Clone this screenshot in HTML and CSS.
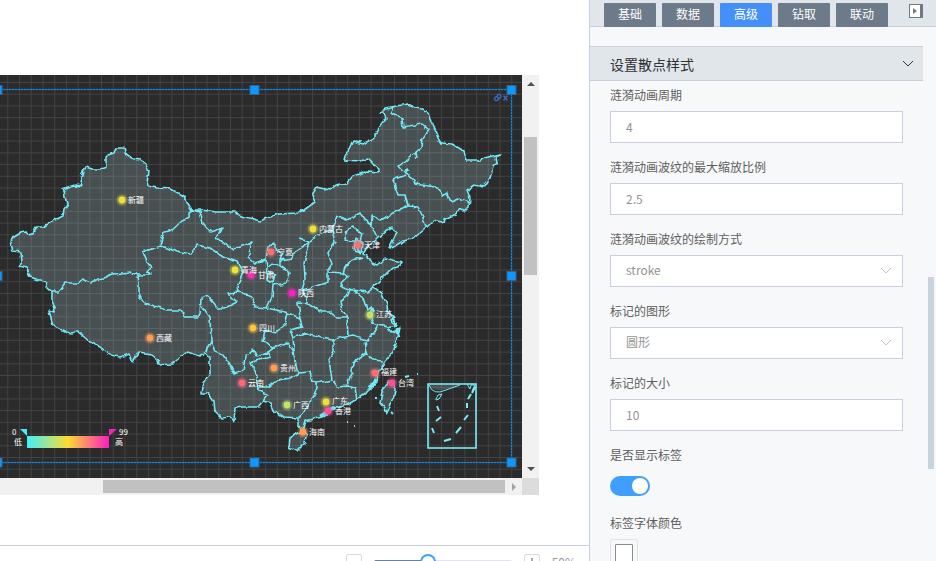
FILE: index.html
```html
<!DOCTYPE html>
<html lang="zh-CN">
<head>
<meta charset="utf-8">
<title>设置散点样式</title>
<link rel="stylesheet" href="styles.css">
</head>
<body>
<div class="app">
  <main class="workspace">
    <div class="stage">
      <svg class="canvas" viewBox="0 75 522 403" role="img" aria-label="中国地图">
        <defs>
          <pattern id="grid" x="19" y="82" width="11.72" height="11.72" patternUnits="userSpaceOnUse">
            <path class="grid-line" d="M.5 0V11.72M0 .5H11.72"/>
          </pattern>
          <linearGradient id="heat">
            <stop offset="0" stop-color="#40effb"/><stop offset=".5" stop-color="#fcdc30"/><stop offset="1" stop-color="#f81ec0"/>
          </linearGradient>
          <filter id="coast" x="-2%" y="-2%" width="104%" height="104%" color-interpolation-filters="sRGB">
            <feTurbulence type="fractalNoise" baseFrequency=".14" numOctaves="2" seed="4" result="n"/>
            <feDisplacementMap in="SourceGraphic" in2="n" scale="5" xChannelSelector="R" yChannelSelector="G"/>
          </filter>
          <g id="dot"><circle r="6.5" opacity=".12"/><circle r="5.2" opacity=".3"/><circle r="3.4"/></g>
        </defs>
        <rect class="backdrop" y="75" width="522" height="403"/>

        <g filter="url(#coast)">
          <path class="land" d="M10 244L13 237 21 232 26 231 28 234 33 233 36 227 43 227 53 221 63 216 64 209 67 205 65 196 64 191 61 189 75 185 82 186 80 182 83 172 86 167 92 169 101 169 106 167 106 157 108 155 114 153 116 148 124 148 125 153 133 159 140 160 146 164 149 171 147 182 148 186 157 188 171 189 183 196 187 202 192 210 200 210 217 212 235 212 238 215 253 219 260 221 278 214 297 213 304 210 315 202 312 195 317 187 330 190 336 185 347 183 353 176 368 171 379 172 379 169 373 164 368 159 360 161 346 160 344 158 353 141 363 144 374 138 374 135 386 119 384 113 380 113 385 108 397 106 407 104 415 108 423 109 430 115 432 122 440 140 442 143 452 144 464 151 467 161 478 161 484 158 501 154 496 158 497 163 493 167 490 178 484 187 474 185 467 190 470 198 469 207 464 212 461 208 457 213 445 219 444 223 434 220 425 229 413 239 403 241 390 249 392 242 397 233 392 228 385 232 378 237 371 244 366 249 363 254 368 256 372 263 377 265 385 258 402 262 399 267 392 268 383 277 373 287 382 293 387 305 388 313 395 317 391 321 396 325 388 327 392 332 400 328 397 338 393 352 385 361 378 372 377 382 367 392 357 399 347 405 335 408 322 417 305 421 303 429 298 427 298 418 283 417 273 410 270 403 263 401 258 407 242 407 235 408 234 421 230 417 222 418 215 411 214 402 208 393 201 393 203 383 210 373 210 357 205 353 200 356 187 352 172 364 158 365 157 359 152 355 138 353 133 362 130 354 120 357 110 355 100 347 90 342 77 331 71 334 53 325 50 315 49 310 54 312 55 307 52 300 52 292 47 287 46 282 30 277 27 268 18 266 22 263 21 252 12 251Z"/>
          <path class="land" d="M299 432L290 438 289 447 297 451 305 443 308 435 303 431ZM388 382L395 383 395 392 387 414 385 408 380 402 382 393Z"/>
          <path class="border" d="M192 210L189 212 189 218 182 221 172 230 164 232 160 246 143 252 147 262 151 267 147 271 150 275 138 275M52 292L58 292 65 283 77 283 82 279 90 283 102 279 113 274 130 272 138 275 139 283 139 297 145 303 167 310 180 310 185 317 197 317 200 314 201 298 207 295 218 308 225 308 237 302 228 293 238 292M160 246L167 248 177 252 190 255 197 245 210 248 223 257 237 262 243 273 237 287 238 292 250 295 255 307 267 308"/>
          <path class="border" d="M192 210L200 212 203 223 210 232 222 228 217 238 233 249 252 243 248 257 255 263 266 259 268 247 275 243 275 250 283 253 280 260 292 258 293 253 310 242 320 233 332 230 337 217 347 220 360 213 365 220 372 225 373 215 380 220 393 213 408 206M255 263L262 262 266 259 267 268 272 264 280 266 280 260M267 268L266 279 273 282 275 274 268 272M280 266L290 273 287 283 273 285 272 297 267 308 288 313 300 318 298 302 308 303 302 290 305 280 304 262 310 242M298 239L310 242"/>
          <path class="border" d="M332 230L335 242 328 253 332 264 328 270 328 282 310 288 302 290M329 272L343 273 346 265 353 260 362 257M343 273L348 277 340 285 352 290 367 292 373 287M350 290L347 297 340 302 342 310 347 318 337 318 330 312 322 312 308 303M347 318L348 336M353 290L363 298 367 310 372 307 370 315 373 323 378 325 388 327M378 325L373 333 367 340 360 338 353 335 348 336 333 340 322 338 310 335M333 340L333 352 329 360 332 380M365 341L367 353 372 360 383 361M367 353L353 363 352 372 347 385M317 383L332 380 338 387 347 386 355 388 357 399"/>
          <path class="border" d="M317 383L317 388 310 403 300 418M258 387L268 387 278 380 290 378 298 373 310 372 312 382 317 383M298 373L295 360 293 350 287 343 272 348 263 340 265 330 275 333 285 325 288 313M300 318L302 327 290 330 293 338 305 333 310 335M293 338L295 360M280 345L267 352 270 357 250 363 257 377 258 390 268 395 263 401M205 353L211 340 210 317 201 305M211 340L215 352 223 355 235 373 243 370 245 357 253 349 257 356 267 352"/>
          <path class="border" d="M393 107L390 113 402 118 403 127 422 124 428 129 422 138 421 148 415 153 399 166 405 173 412 177 415 184 435 187 443 196 447 193 451 202 460 198 469 203M415 153L416 158M405 175L393 180 398 195 405 195 408 206 418 207 423 217 426 228M372 215L372 227 377 237M347 230L353 227 362 233 360 242 345 240ZM356 238L363 243 362 252 354 250Z"/>
          <path class="border thick" d="M405 171L409 169M371 307L374 311M393 317L396 324M396 328L399 338M376 379L368 390M335 407L320 416M356 245L361 253"/>
        </g>
        <path class="islands" d="M405 377L409 376M417 374h1M347 422h1M354 426h1M375 398h2M391 412l2 2M401 244h1"/>

        <path class="inset-fill" d="M429 385Q436 396 460 384Z"/>
        <rect class="inset" x="428" y="384" width="48" height="64"/>
        <path class="inset-line" d="M429 385Q433 396 446 390 L460 385M467 384l3 5 1-4 4 0-3 6M436 399l2-4 4-1-3 5-3 1Z"/>
        <path class="inset-dash" d="M437 406l2 5M436 421l5-4M432 428l2 5M444 441l7-2M456 433l5-6M464 420l4-5M467 403v5M468 399l3-5M472 393l3-6"/>

        <rect y="75" width="522" height="403" fill="url(#grid)"/>

        <g>
          <use href="#dot" x="122" y="200" fill="#f0e13a"/><use href="#dot" x="313" y="229" fill="#f0e13a"/>
          <use href="#dot" x="235" y="270" fill="#f0e13a"/><use href="#dot" x="326" y="402" fill="#f0e13a"/>
          <use href="#dot" x="358" y="245" fill="#fa7076"/><use href="#dot" x="271" y="252" fill="#fa7076"/>
          <use href="#dot" x="375" y="373" fill="#fa7076"/><use href="#dot" x="242" y="383" fill="#fa667a"/>
          <use href="#dot" x="251" y="275" fill="#f032b0"/><use href="#dot" x="292" y="293" fill="#f720c0"/>
          <use href="#dot" x="253" y="328" fill="#fcc63a"/><use href="#dot" x="370" y="315" fill="#c2e36b"/>
          <use href="#dot" x="287" y="405" fill="#c2e36b"/><use href="#dot" x="150" y="338" fill="#ff9c56"/>
          <use href="#dot" x="274" y="368" fill="#ff9c56"/><use href="#dot" x="303" y="432" fill="#ff9c56"/>
          <use href="#dot" x="328" y="411" fill="#fb4f98"/><use href="#dot" x="392" y="383" fill="#fb4f98"/>
        </g>
        <g class="place">
          <text x="128" y="203">新疆</text><text x="319" y="232">内蒙古</text><text x="364" y="248">天津</text>
          <text x="277" y="255">宁夏</text><text x="241" y="273">青海</text><text x="258" y="278">甘肃</text>
          <text x="298" y="296">陕西</text><text x="259" y="331">四川</text><text x="376" y="317">江苏</text>
          <text x="156" y="341">西藏</text><text x="248" y="386">云南</text><text x="280" y="371">贵州</text>
          <text x="293" y="408">广西</text><text x="332" y="404">广东</text><text x="335" y="414">香港</text>
          <text x="381" y="375">福建</text><text x="398" y="386">台湾</text><text x="309" y="435">海南</text>
          <text x="12" y="435">0</text><text x="14" y="445">低</text><text x="119" y="435">99</text><text x="115" y="445">高</text>
        </g>

        <rect x="27" y="436" width="82" height="12" fill="url(#heat)"/>
        <path fill="#40effb" d="M20 429h7v7Z"/><path fill="#f81ec0" d="M109 429h8l-8 7Z"/>

        <path class="selection-base" d="M0 89.500H511.500V462.500H0"/>
        <path class="selection" d="M0 89.500H511.500V462.500H0"/>
        <g class="handle">
          <rect x="-7" y="85.500" width="9" height="9"/><rect x="250" y="85.500" width="9" height="9"/><rect x="507" y="85.500" width="9" height="9"/>
          <rect x="-7" y="271.500" width="9" height="9"/><rect x="507" y="271.500" width="9" height="9"/>
          <rect x="-7" y="458" width="9" height="9"/><rect x="250" y="458" width="9" height="9"/><rect x="507" y="458" width="9" height="9"/>
        </g>
        <path class="tools" d="M495 97.500q-1 2 .5 3h2q1.500-1 .5-3Q497 96 495 97.500ZM497 96l1-1.500h2q1.500 1 .5 3l-1.500 1M503.500 95.500l4 5M507.500 95.500l-4 5"/>
      </svg>
      <div class="vbar"><i class="arrow up"></i><i class="vthumb"></i><i class="arrow down"></i></div>
      <div class="hbar"><i class="hthumb"></i><i class="arrow right"></i></div>
      <div class="corner"></div>
    </div>
    <footer class="zoombar">
      <button class="step" type="button" aria-label="缩小"></button>
      <input class="zoom" type="range" min="0" max="100" value="38" aria-label="缩放">
      <button class="step" type="button" aria-label="放大"><svg viewBox="0 0 14 14"><path d="M7 3v8M3 7h8"/></svg></button>
      <output class="percent">50%</output>
    </footer>
  </main>

  <aside class="panel">
    <nav class="tabs">
      <button class="tab" type="button">基础</button>
      <button class="tab" type="button">数据</button>
      <button class="tab active" type="button">高级</button>
      <button class="tab" type="button">钻取</button>
      <button class="tab" type="button">联动</button>
      <button class="fold" type="button" aria-label="收起"><svg viewBox="0 0 14 14"><path fill="#6c7a89" d="M0 0h14v14H0Z"/><path fill="#fff" d="M1 1h10v12H1Z"/><path fill="#6c7a89" d="M4 4l4 3-4 3Z"/></svg></button>
    </nav>
    <button class="section" type="button">设置散点样式<svg class="chevron" viewBox="0 0 12 8"><path d="M1 1l5 5 5-5"/></svg></button>
    <form class="fields">
      <div class="field"><label for="period">涟漪动画周期</label><input class="box" id="period" type="text" value="4"></div>
      <div class="field"><label for="scale">涟漪动画波纹的最大缩放比例</label><input class="box" id="scale" type="text" value="2.5"></div>
      <div class="field"><label for="brush">涟漪动画波纹的绘制方式</label>
        <div class="pick"><select class="box" id="brush"><option>stroke</option></select><svg class="chevron" viewBox="0 0 12 8"><path d="M1 1l5 5 5-5"/></svg></div></div>
      <div class="field"><label for="shape">标记的图形</label>
        <div class="pick"><select class="box" id="shape"><option>圆形</option></select><svg class="chevron" viewBox="0 0 12 8"><path d="M1 1l5 5 5-5"/></svg></div></div>
      <div class="field"><label for="size">标记的大小</label><input class="box" id="size" type="text" value="10"></div>
      <div class="field"><label for="show">是否显示标签</label><div class="switch-row"><input class="switch" id="show" type="checkbox" checked></div></div>
      <div class="field"><label for="color">标签字体颜色</label><input class="color" id="color" type="color" value="#ffffff"></div>
    </form>
    <i class="panel-thumb"></i>
  </aside>
</div>
</body>
</html>
```
FILE: styles.css
```css
* { box-sizing: border-box; }

body {
  margin: 0;
  background: #fff;
  color: #5e5e5e;
  font: 12px/16px "Noto Sans CJK SC", "Liberation Sans", sans-serif;
}

button, input, select { margin: 0; font: inherit; color: inherit; }

.app { display: flex; height: 100vh; overflow: hidden; }

/* workspace */
.workspace { flex: 1; min-width: 0; display: flex; flex-direction: column; justify-content: space-between; }

.stage {
  display: grid;
  grid-template-columns: 1fr 17px;
  grid-template-rows: auto 17px;
  margin: 75px 50px 0 0;
}

.canvas { display: block; width: 100%; }
.backdrop { fill: #2b2b2b; }
.grid-line { fill: none; stroke: #fff; stroke-opacity: .11; }
.land { fill: #485052; stroke: #6fe9f5; stroke-width: 1.6; stroke-linejoin: round; }
.border { fill: none; stroke: #6fe9f5; stroke-width: 1.6; stroke-linejoin: round; }
.thick { stroke-width: 3; }
.islands { fill: none; stroke: #6fe9f5; stroke-width: 2; }
.inset-fill { fill: #485052; }
.inset { fill: none; stroke: #7aeaf6; stroke-width: 1.6; }
.inset-line { fill: none; stroke: #6fe9f5; }
.inset-dash { fill: none; stroke: #7aeaf6; stroke-width: 2; }
.place { fill: #fff; font-size: 8px; }
.selection-base { fill: none; stroke: #17568a; stroke-width: 1.4; }
.selection { fill: none; stroke: #1f84d0; stroke-width: 1; stroke-dasharray: 2 1; }
.handle { fill: #0d98fd; stroke: #32648d; stroke-width: 1; }
.tools { fill: none; stroke: #3c69b8; stroke-width: 1.4; }

.vbar {
  display: flex;
  flex-direction: column;
  align-items: center;
  padding: 7px 2px;
  background: #f1f1f1;
}
.vthumb { width: 13px; height: 138px; margin: 51px 0 auto; background: #c1c1c1; }
.hbar { display: flex; align-items: center; justify-content: flex-end; gap: 7px; padding: 2px 6px 2px 0; background: #f1f1f1; }
.hthumb { width: 78%; height: 13px; background: #c1c1c1; }
.corner { background: #dcdcdc; }
.arrow { border: 4px solid transparent; }
.up { border-top: 0; border-bottom-color: #505050; }
.down { border-bottom: 0; border-top-color: #505050; }
.right { border-right: 0; border-left-color: #a3a3a3; }

.zoombar {
  display: flex;
  align-items: flex-start;
  justify-content: flex-end;
  gap: 12px;
  height: 16px;
  padding: 8px 13px 0 0;
  overflow: hidden;
  border-top: 1px solid #c8cfdd;
}
.step { flex: none; width: 16px; height: 16px; padding: 0; border: 1px solid #d8d9e4; border-radius: 2px; background: #fff; }
.step svg { display: block; width: 14px; height: 14px; fill: none; stroke: #555; }
.zoom { appearance: none; width: 138px; height: 16px; background: none; }
.zoom::-webkit-slider-runnable-track {
  height: 4px;
  border-radius: 2px;
  background: linear-gradient(90deg, #66809e 39%, #e3e4ee 39%);
}
.zoom::-webkit-slider-thumb {
  appearance: none;
  width: 16px;
  height: 16px;
  margin-top: -6px;
  border: 2px solid #409eff;
  border-radius: 50%;
  background: #fff;
}
.percent { color: #999; }

/* settings panel */
.panel {
  position: relative;
  flex: none;
  width: 347px;
  overflow: hidden;
  border-left: 1px solid #c8cfdd;
  background: #f7f8fa;
}
.tabs {
  display: flex;
  gap: 6px;
  height: 27px;
  padding: 3px 13px 0 14px;
  border-bottom: 1px solid #c8cfdd;
  background: #e1e6ea;
}
.tab { width: 52px; height: 24px; padding: 0 0 2px; border: 0; border-radius: 1px; background: #6c7a89; color: #fff; }
.tab.active { background: #458ffb; }
.fold { width: 14px; height: 14px; margin: 1px 0 0 auto; padding: 0; border: 0; background: none; }
.fold svg { display: block; }

.section {
  display: flex;
  align-items: center;
  justify-content: space-between;
  width: calc(100% - 13px);
  height: 35px;
  margin-top: 19px;
  padding: 0 9px 0 20px;
  border: solid #c8cfdd;
  border-width: 1px 0;
  background: #e1e6ea;
  color: #303133;
  font-size: 14px;
}
.chevron { width: 12px; height: 8px; fill: none; stroke: #303133; }

.fields { display: flex; flex-direction: column; gap: 10px; padding: 0 33px 0 20px; }
.field { display: flex; flex-direction: column; }
.field label { padding-bottom: 2px; line-height: 28px; }
.box {
  appearance: none;
  width: 100%;
  height: 32px;
  padding: 0 15px 2px;
  border: 1px solid #c8cfdd;
  border-radius: 0;
  background: #fff;
  color: #949494;
}
.pick { display: grid; align-items: center; }
.pick > * { grid-area: 1 / 1; }
.pick .chevron { justify-self: end; margin-right: 11px; stroke: #c0c4cc; pointer-events: none; }

.switch-row { display: flex; align-items: center; height: 28px; padding-top: 2px; }
.switch { appearance: none; display: flex; justify-content: flex-end; width: 40px; height: 20px; padding: 2px; border-radius: 10px; background: #409eff; }
.switch::before { content: ""; width: 16px; border-radius: 50%; background: #fff; }

.color { appearance: none; width: 28px; height: 28px; padding: 4px; border: 1px solid #e0e1e4; border-radius: 3px; background: #f7f8fa; }
.color::-webkit-color-swatch-wrapper { padding: 0; }
.color::-webkit-color-swatch { border: 1px solid #8c8c8c; border-radius: 1px; }

.panel-thumb { position: absolute; top: 277px; right: 2px; width: 6px; height: 192px; background: #c9d3de; }
```
